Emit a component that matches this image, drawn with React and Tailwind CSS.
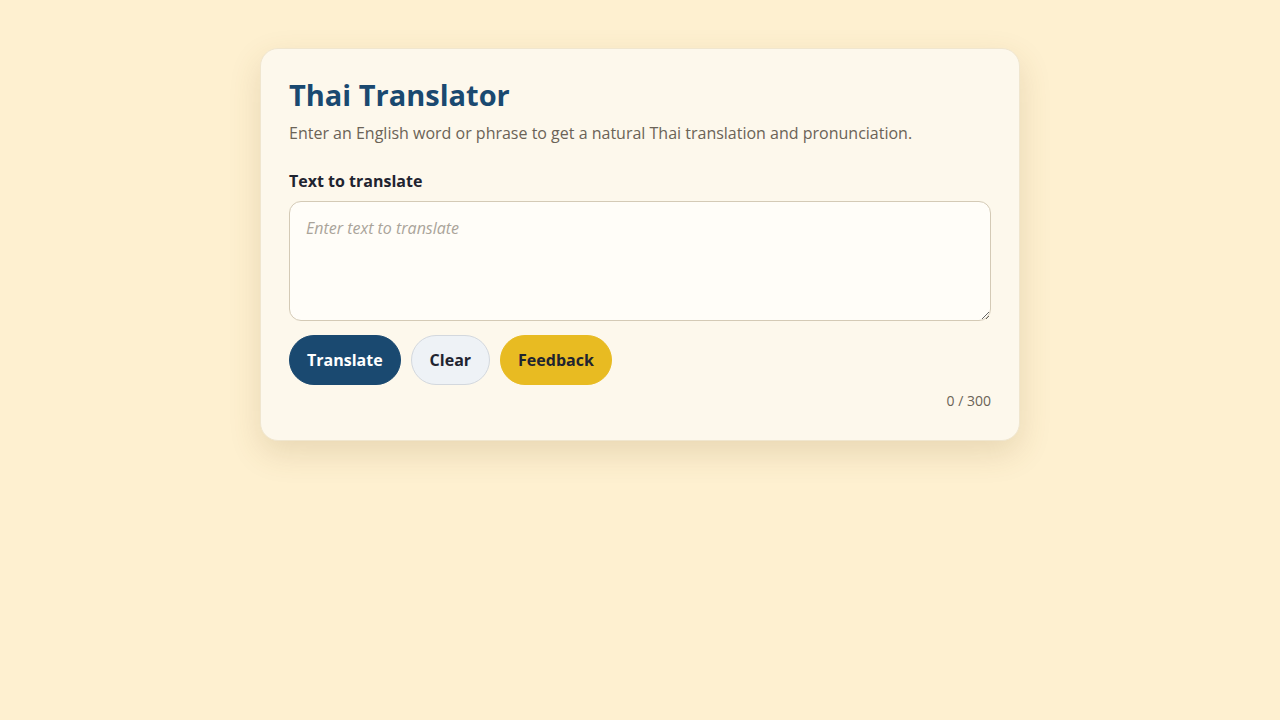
export default function App() {
  return (
    <div className="min-h-screen w-full bg-[#fef0d0] pt-12" style={{ fontFamily: '"Open Sans", "Noto Sans", sans-serif' }}>
      <div className="mx-auto w-[760px] rounded-[18px] border border-[#f0e6cf] bg-[#fdf8ec] px-[28px] pt-[28px] pb-[29px] shadow-[0_12px_32px_rgba(120,90,30,0.16)]">
        <h1 className="text-[29px] font-bold leading-[36px] text-[#1a4970]">Thai Translator</h1>
        <p className="mt-[8px] text-[16px] leading-6 text-[#6b6357]">
          Enter an English word or phrase to get a natural Thai translation and pronunciation.
        </p>
        <label className="mt-6 block text-[16px] font-bold leading-6 text-[#1f2430]">Text to translate</label>
        <textarea
          className="mt-2 block h-[120px] w-full resize-y rounded-[12px] border border-[#d4cab6] bg-[#fffdf8] px-4 py-[14px] text-[16px] leading-6 text-[#1f2430] outline-none placeholder:italic placeholder:text-[#aaa49a]"
          placeholder="Enter text to translate"
        />
        <div className="mt-[14px] flex gap-[10px]">
          <button className="h-[50px] rounded-full border border-[#1a4970] bg-[#1a4970] px-[17px] text-[16px] font-bold text-white">Translate</button>
          <button className="h-[50px] rounded-full border border-[#d3d8de] bg-[#eef2f6] px-[18px] text-[16px] font-bold text-[#1f2430]">Clear</button>
          <button className="h-[50px] rounded-full border border-[#e8bb22] bg-[#e8bb22] px-[17px] text-[16px] font-bold text-[#1f2430]">Feedback</button>
        </div>
        <div className="mt-[6px] text-right text-[14px] leading-5 text-[#6b6357]">0 / 300</div>
      </div>
    </div>
  );
}
